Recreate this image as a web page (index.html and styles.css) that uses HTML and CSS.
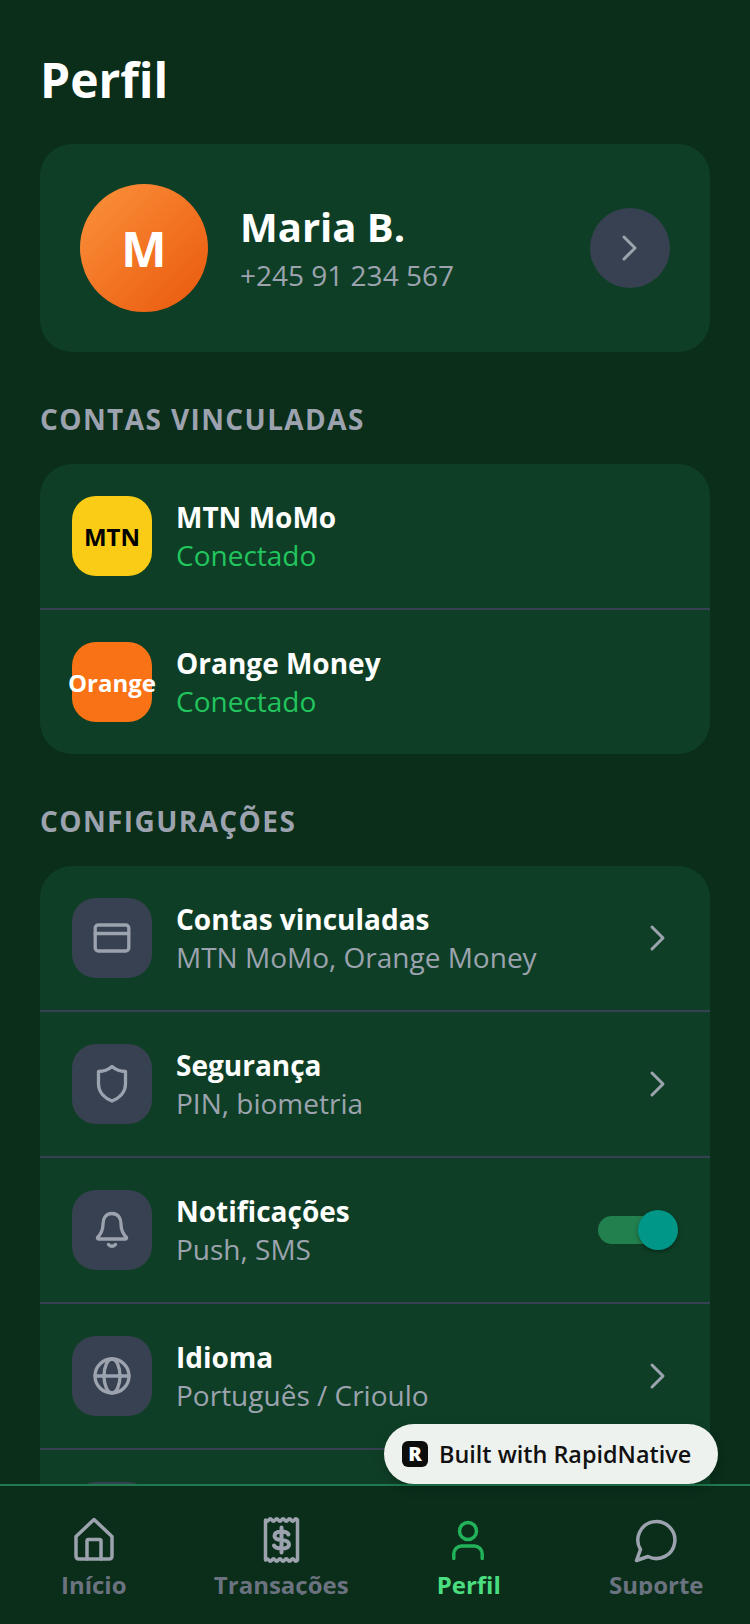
FILE: index.html
```html
<!DOCTYPE html>
<html lang="pt">
<head>
<meta charset="utf-8">
<title>Perfil</title>
<link rel="stylesheet" href="styles.css">
</head>
<body>
<div class="app">
  <main class="content">
    <h1 class="title">Perfil</h1>

    <section class="card profile">
      <div class="avatar">M</div>
      <div class="profile-info">
        <div class="name">Maria B.</div>
        <div class="phone">+245 91 234 567</div>
      </div>
      <div class="profile-btn">
        <svg class="chev-svg" viewBox="0 0 20 28"><path d="M4 3l11 11L4 25"/></svg>
      </div>
    </section>

    <h2 class="section-label">CONTAS VINCULADAS</h2>
    <section class="card">
      <div class="row">
        <div class="icon-box mtn">MTN</div>
        <div class="row-text">
          <div class="row-title">MTN MoMo</div>
          <div class="row-status">Conectado</div>
        </div>
      </div>
      <div class="row">
        <div class="icon-box orange">Orange</div>
        <div class="row-text">
          <div class="row-title">Orange Money</div>
          <div class="row-status">Conectado</div>
        </div>
      </div>
    </section>

    <h2 class="section-label">CONFIGURAÇÕES</h2>
    <section class="card">
      <div class="row">
        <div class="icon-box setting">
          <svg class="set-svg" viewBox="0 0 44 44"><rect x="5.2" y="9" width="33.6" height="26" rx="3"/><path d="M5.2 17.5h33.6"/></svg>
        </div>
        <div class="row-text">
          <div class="row-title">Contas vinculadas</div>
          <div class="row-sub">MTN MoMo, Orange Money</div>
        </div>
        <svg class="chev-svg row-chev" viewBox="0 0 20 28"><path d="M4 3l11 11L4 25"/></svg>
      </div>
      <div class="row">
        <div class="icon-box setting">
          <svg class="set-svg" viewBox="0 0 44 44"><path d="M22 4.5C26 8 31 9.5 35.5 9.5V22C35.5 31 28.5 36.5 22 39C15.5 36.5 8.5 31 8.5 22V9.5C13 9.5 18 8 22 4.5Z"/></svg>
        </div>
        <div class="row-text">
          <div class="row-title">Segurança</div>
          <div class="row-sub">PIN, biometria</div>
        </div>
        <svg class="chev-svg row-chev" viewBox="0 0 20 28"><path d="M4 3l11 11L4 25"/></svg>
      </div>
      <div class="row">
        <div class="icon-box setting">
          <svg class="set-svg" viewBox="0 0 44 44"><path d="M22 5.5C15.5 5.5 13 10.5 13 16C13 22 11.5 25.5 7.5 29.5Q7 31 9 31H35Q37 31 36.5 29.5C32.5 25.5 31 22 31 16C31 10.5 28.5 5.5 22 5.5Z"/><path d="M18.5 36.5Q22 40 25.5 36.5"/></svg>
        </div>
        <div class="row-text">
          <div class="row-title">Notificações</div>
          <div class="row-sub">Push, SMS</div>
        </div>
        <div class="toggle"><span class="toggle-thumb"></span></div>
      </div>
      <div class="row">
        <div class="icon-box setting">
          <svg class="set-svg" viewBox="0 0 44 44"><circle cx="22" cy="22" r="17"/><ellipse cx="22" cy="22" rx="8" ry="17"/><path d="M5 22h34"/></svg>
        </div>
        <div class="row-text">
          <div class="row-title">Idioma</div>
          <div class="row-sub">Português / Crioulo</div>
        </div>
        <svg class="chev-svg row-chev" viewBox="0 0 20 28"><path d="M4 3l11 11L4 25"/></svg>
      </div>
      <div class="row">
        <div class="icon-box setting"></div>
      </div>
    </section>
  </main>

  <div class="badge">
    <span class="badge-logo">R</span>
    <span class="badge-text">Built with RapidNative</span>
  </div>

  <nav class="tabbar">
    <div class="tab">
      <svg class="tab-svg" viewBox="0 0 48 48"><path d="M6 20.5L24 3.5L42 20.5V40Q42 43 39 43H9Q6 43 6 40Z"/><path d="M17 43V25Q17 23.5 18.5 23.5H29.5Q31 23.5 31 25V43"/></svg>
      <span class="tab-label">Início</span>
    </div>
    <div class="tab">
      <svg class="tab-svg" viewBox="0 0 48 48"><path d="M8.5 4q1.6 2.5 3.2 0t3.200 0t3.200 0t3.200 0t3.200 0t3.200 0t3.200 0t3.200 0t3.200 0t3.200 0V44q-1.600 2.500-3.200 0t-3.200 0t-3.200 0t-3.200 0t-3.200 0t-3.200 0t-3.200 0t-3.200 0t-3.200 0t-3.200 0Z"/><path class="bold" d="M31.5 18.5Q30 15.5 24.5 15.5Q17.5 15.5 17.5 20Q17.5 23.5 24.5 24Q32 24.5 32 28.5Q32 32.5 24.5 32.5Q18.5 32.5 17 29.5M24.5 11.5V36.500"/></svg>
      <span class="tab-label">Transações</span>
    </div>
    <div class="tab tab-active">
      <svg class="tab-svg" viewBox="0 0 48 48"><circle cx="23" cy="15" r="8.5"/><path d="M8.8 42.5V38A8 8 0 0 1 16.8 30H29.2A8 8 0 0 1 37.2 38V42.5"/></svg>
      <span class="tab-label">Perfil</span>
    </div>
    <div class="tab">
      <svg class="tab-svg" viewBox="0 0 48 48"><path d="M4.5 44.5L8.5 33.5A18.5 18.5 0 1 1 16 40.5Z"/></svg>
      <span class="tab-label">Suporte</span>
    </div>
  </nav>
</div>
</body>
</html>
```

FILE: styles.css
```css
* { box-sizing: border-box; }
html, body { margin: 0; padding: 0; }
body { background: #0a2e1a; font-family: "Open Sans", sans-serif; color: #fff; }

.app { position: relative; width: 750px; height: 1624px; display: flex; flex-direction: column; overflow: hidden; background: #0a2e1a; }
.content { flex: 1; min-height: 0; overflow: hidden; padding: 48px 40px 0; }

.title { margin: 0 0 32px; font-size: 48px; line-height: 64px; font-weight: 700; }

.card { background: #0e3f26; border-radius: 32px; overflow: hidden; }
.profile { display: flex; align-items: center; padding: 40px; height: 208px; }
.avatar { width: 128px; height: 128px; border-radius: 50%; background: linear-gradient(135deg, #fb923c, #ea580c); display: flex; align-items: center; justify-content: center; font-size: 48px; font-weight: 700; flex: none; }
.profile-info { flex: 1; margin-left: 32px; display: flex; flex-direction: column; }
.name { font-size: 40px; line-height: 54px; font-weight: 700; }
.phone { font-size: 28px; line-height: 42px; color: #9ca3af; }
.profile-btn { width: 80px; height: 80px; border-radius: 50%; background: #374151; display: flex; align-items: center; justify-content: center; flex: none; }

.chev-svg { width: 20px; height: 28px; fill: none; stroke: #9ca3af; stroke-width: 3; stroke-linecap: round; stroke-linejoin: round; flex: none; }
.row-chev { margin-right: 10px; }

.section-label { margin: 48px 0 26px; font-size: 28px; line-height: 38px; font-weight: 700; letter-spacing: 1.4px; color: #9ca3af; }

.row { display: flex; align-items: center; padding: 32px; height: 146px; border-bottom: 2px solid #374151; }
.row:last-child { border-bottom: 0; height: 144px; }
.icon-box { width: 80px; height: 80px; border-radius: 24px; display: flex; align-items: center; justify-content: center; flex: none; font-weight: 700; font-size: 24px; white-space: nowrap; }
.mtn { background: #facc15; color: #000; }
.orange { background: #f97316; color: #fff; }
.setting { background: #374151; }
.set-svg { width: 44px; height: 44px; fill: none; stroke: #9ca3af; stroke-width: 3.3; stroke-linecap: round; stroke-linejoin: round; }

.row-text { flex: 1; margin-left: 24px; min-width: 0; }
.row-title { font-size: 28px; line-height: 39px; font-weight: 700; }
.row-status { font-size: 28px; line-height: 37px; color: #22c55e; }
.row-sub { font-size: 28px; line-height: 37px; color: #9ca3af; }

.toggle { position: relative; width: 72px; height: 28px; margin-right: 8px; border-radius: 14px; background: #22804f; flex: none; }
.toggle-thumb { position: absolute; right: -8px; top: -6px; width: 40px; height: 40px; border-radius: 50%; background: #009688; box-shadow: 0 2px 5px rgba(0,0,0,.35); }

.badge { position: absolute; left: 384px; top: 1424px; width: 334px; height: 60px; border-radius: 30px; background: #eef2ef; display: flex; align-items: center; padding-left: 18px; gap: 11px; box-shadow: 0 4px 12px rgba(0,0,0,.2); }
.badge-logo { width: 26px; height: 26px; border-radius: 6px; background: #0d0d0d; color: #fff; font-size: 20px; font-weight: 800; line-height: 26px; text-align: center; flex: none; }
.badge-text { font-size: 23.4px; line-height: 32px; font-weight: 600; color: #111; white-space: nowrap; }

.tabbar { flex: none; height: 140px; border-top: 2px solid #1f7a4d; background: #0a2e1a; display: flex; }
.tab { flex: 1; display: flex; flex-direction: column; align-items: center; padding-top: 30px; color: #6b7280; }
.tab-svg { width: 48px; height: 48px; fill: none; stroke: #9ca3af; stroke-width: 3.5; stroke-linecap: round; stroke-linejoin: round; flex: none; }
.tab-svg .bold { stroke-width: 4; }
.tab-active { color: #4ade80; }
.tab-active .tab-svg { stroke: #22b35a; }
.tab-label { display: block; margin-top: 9px; height: 22px; overflow: hidden; font-size: 24px; line-height: 24px; font-weight: 700; white-space: nowrap; }
```
